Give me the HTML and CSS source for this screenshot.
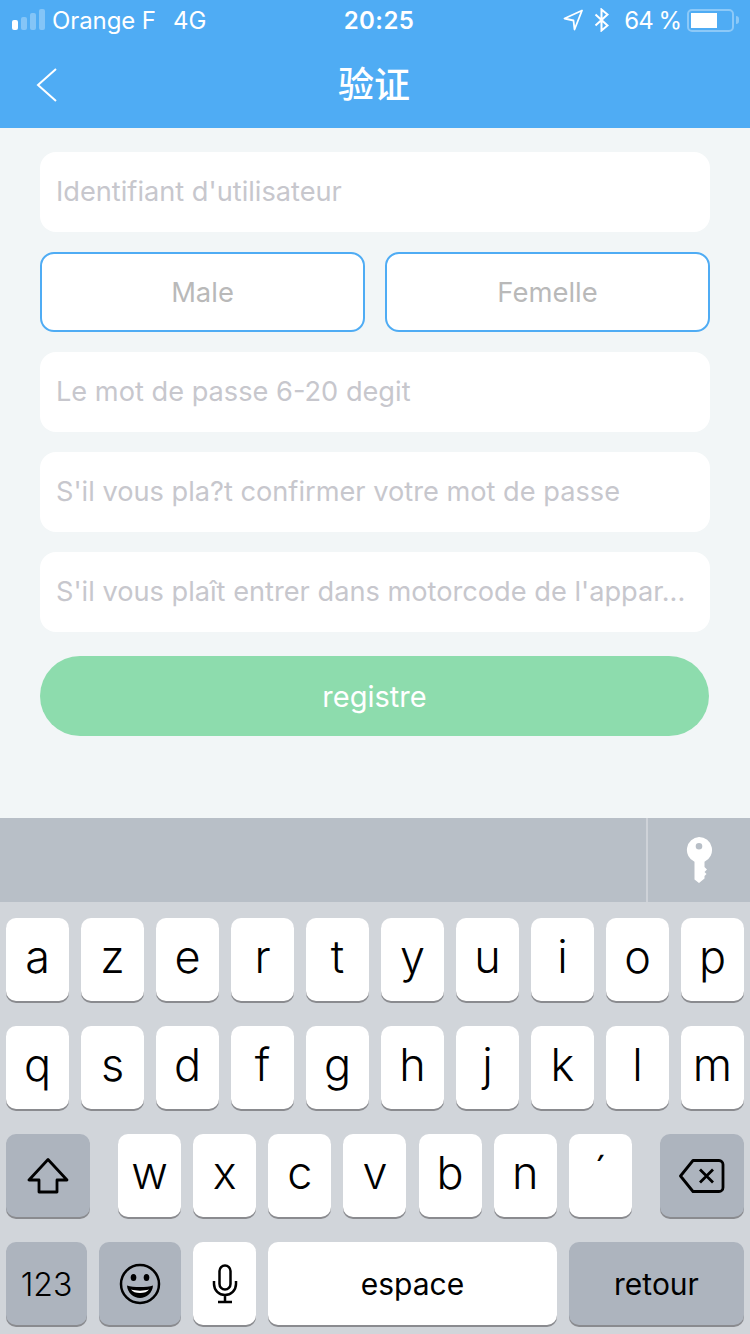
FILE: index.html
```html
<!DOCTYPE html>
<html lang="fr">
<head>
  <meta charset="UTF-8">
  <title>验证</title>
  <meta name="viewport" content="width=device-width, initial-scale=1">
  <link rel="stylesheet" href="styles.css">
</head>
<body>
  <div class="screen">
    <header class="header">
      <div class="status-bar">
        <div class="status-left">
          <svg class="signal" width="34" height="22" viewBox="0 0 34 22">
            <rect x="0" y="11" width="6" height="10" rx="2" fill="#fff"/>
            <rect x="9" y="8" width="6" height="13" rx="2" fill="#fff" opacity=".3"/>
            <rect x="18" y="4" width="6" height="17" rx="2" fill="#fff" opacity=".3"/>
            <rect x="27" y="0" width="6" height="21" rx="2" fill="#fff" opacity=".3"/>
          </svg>
          <span class="carrier">Orange F</span>
          <span class="network">4G</span>
        </div>
        <div class="clock">20:25</div>
        <div class="status-right">
          <svg class="locate" width="20" height="22" viewBox="0 0 20 22">
            <path d="M19 1.500 1.500 9.500 10.500 11.500 11.500 20.500Z" fill="none" stroke="#fff" stroke-width="1.800" stroke-linejoin="round"/>
          </svg>
          <svg class="bluetooth" width="16" height="24" viewBox="0 0 16 24">
            <path d="M1.500 6.500 13.500 17.500 7.500 22.500V1.500L13.500 6.500 1.500 17.500" fill="none" stroke="#fff" stroke-width="2"/>
          </svg>
          <span class="battery-pct">64 %</span>
          <div class="battery"><div class="battery-level"></div></div>
          <div class="battery-tip"></div>
        </div>
      </div>
      <div class="nav-bar">
        <svg class="back" width="22" height="34" viewBox="0 0 22 34">
          <path d="M20 1 2 17 20 33" fill="none" stroke="#fff" stroke-width="2"/>
        </svg>
        <h1 class="title">验证</h1>
      </div>
    </header>

    <main class="form">
      <div class="field">Identifiant d'utilisateur</div>
      <div class="gender-row">
        <div class="gender">Male</div>
        <div class="gender">Femelle</div>
      </div>
      <div class="field">Le mot de passe 6-20 degit</div>
      <div class="field">S'il vous pla?t confirmer votre mot de passe</div>
      <div class="field">S'il vous plaît entrer dans motorcode de l'appar...</div>
      <div class="submit">registre</div>
    </main>

    <section class="keyboard">
      <div class="toolbar">
        <div class="toolbar-key">
          <svg width="28" height="46" viewBox="0 0 28 46">
            <path fill-rule="evenodd" fill="#fff" d="M14 0a13 13 0 0 1 5.500 24.800V30l2.500 2.500-2.500 2.500 2 2-2 2v2.500L14 46l-4.500-3.500V24.800A13 13 0 0 1 14 0Zm0 6a3.300 3.300 0 1 0 0 6.600 3.300 3.300 0 0 0 0-6.600Z"/>
          </svg>
        </div>
      </div>
      <div class="keys">
        <div class="key-row">
          <div class="key">a</div><div class="key">z</div><div class="key">e</div><div class="key">r</div><div class="key">t</div>
          <div class="key">y</div><div class="key">u</div><div class="key">i</div><div class="key">o</div><div class="key">p</div>
        </div>
        <div class="key-row">
          <div class="key">q</div><div class="key">s</div><div class="key">d</div><div class="key">f</div><div class="key">g</div>
          <div class="key">h</div><div class="key">j</div><div class="key">k</div><div class="key">l</div><div class="key">m</div>
        </div>
        <div class="key-row key-row-split">
          <div class="key key-dark key-side key-plain">
            <svg width="42" height="36" viewBox="0 0 42 36">
              <path d="M21 1.500 2 22H12V34H30V22H40Z" fill="none" stroke="#000" stroke-width="2.800" stroke-linejoin="round"/>
            </svg>
          </div>
          <div class="key-group">
            <div class="key">w</div><div class="key">x</div><div class="key">c</div><div class="key">v</div>
            <div class="key">b</div><div class="key">n</div><div class="key">´</div>
          </div>
          <div class="key key-dark key-side key-plain">
            <svg width="46" height="34" viewBox="0 0 46 34">
              <path d="M14 1.500H40a4 4 0 0 1 4 4V28.500a4 4 0 0 1-4 4H14L1.500 17Z" fill="none" stroke="#000" stroke-width="2.800" stroke-linejoin="round"/>
              <path d="M21 10.500 34 23.500M34 10.500 21 23.500" fill="none" stroke="#000" stroke-width="2.800"/>
            </svg>
          </div>
        </div>
        <div class="key-row">
          <div class="key key-dark key-num">123</div>
          <div class="key key-dark key-emoji key-plain">
            <svg width="42" height="42" viewBox="0 0 42 42">
              <circle cx="21" cy="21" r="19" fill="none" stroke="#000" stroke-width="2.500"/>
              <ellipse cx="14.500" cy="14.500" rx="2.800" ry="3.500"/>
              <ellipse cx="27.500" cy="14.500" rx="2.800" ry="3.500"/>
              <path d="M8 22.500C14 24.500 28 24.500 34 22.500 33.500 30 27.500 35 21 35S8.500 30 8 22.500Z"/>
              <path d="M12 26.500C17 28 25 28 30 26.500 28.500 29 25 30 21 30S13.500 29 12 26.500Z" fill="#fff"/>
            </svg>
          </div>
          <div class="key key-plain">
            <svg width="26" height="40" viewBox="0 0 26 40">
              <rect x="7.500" y="1.500" width="11" height="24" rx="5.500" fill="none" stroke="#000" stroke-width="2.500"/>
              <path d="M2 17V20a11 11 0 0 0 22 0V17M13 31V37M6 38H20" fill="none" stroke="#000" stroke-width="2.500"/>
            </svg>
          </div>
          <div class="key key-plain key-space">espace</div>
          <div class="key key-dark key-plain key-return">retour</div>
        </div>
      </div>
    </section>
  </div>
</body>
</html>
```

FILE: styles.css
```css
:root {
  --blue: #4facf4;
  --page-bg: #f2f6f7;
  --hint: #c7c7cd;
  --kb-bg: #d1d5da;
  --key-dark: #adb4be;
  --font: 'Inter', 'Liberation Sans', 'Noto Sans CJK SC', sans-serif;
}
* {
  box-sizing: border-box;
}
body {
  margin: 0;
  font-family: var(--font);
  background: var(--page-bg);
}
.screen {
  width: 750px;
  height: 1334px;
  display: flex;
  flex-direction: column;
  overflow: hidden;
}

/* header */
.header {
  height: 128px;
  background: var(--blue);
  color: #fff;
  flex: none;
}
.status-bar {
  height: 40px;
  padding: 0 12px;
  display: flex;
  align-items: center;
  justify-content: space-between;
  position: relative;
  font-size: 24px;
}
.status-left, .status-right {
  display: flex;
  align-items: center;
}
.signal {
  margin-right: 6px;
}
.carrier {
  letter-spacing: -0.1px;
}
.network {
  margin-left: 17px;
}
.clock {
  position: absolute;
  left: 0;
  right: 0;
  text-align: center;
  font-weight: 600;
  letter-spacing: 0.4px;
  padding-left: 8px;
}
.status-right {
  margin-right: -1px;
}
.bluetooth {
  margin-left: 11px;
}
.battery-pct {
  margin-left: 14px;
  margin-right: 6px;
  letter-spacing: -1px;
}
.battery {
  width: 47px;
  height: 23px;
  border: 2px solid rgba(255,255,255,0.35);
  border-radius: 5px;
  padding: 2px;
}
.battery-level {
  width: 26px;
  height: 15px;
  background: #fff;
}
.battery-tip {
  width: 3px;
  height: 8px;
  margin-left: 2px;
  background: rgba(255,255,255,0.35);
  border-radius: 0 3px 3px 0;
}
.nav-bar {
  height: 88px;
  display: flex;
  align-items: center;
  justify-content: center;
  padding-right: 2px;
  position: relative;
}
.back {
  position: absolute;
  left: 36px;
  top: 28px;
}
.title {
  margin: 0;
  font-size: 36px;
  font-weight: 500;
  font-family: 'Noto Sans CJK SC', sans-serif;
  line-height: 1;
  position: relative;
  top: -2px;
}

/* form */
.form {
  flex: 1;
  padding: 24px 40px 0 40px;
  display: flex;
  flex-direction: column;
  gap: 20px;
}
.field {
  height: 80px;
  padding: 0 17px 2px 16px;
  display: flex;
  align-items: center;
  background: #fff;
  border-radius: 16px;
  color: var(--hint);
  font-size: 27.2px;
  white-space: nowrap;
}
.gender-row {
  display: flex;
  gap: 20px;
}
.gender {
  flex: 1;
  height: 80px;
  display: flex;
  align-items: center;
  justify-content: center;
  background: #fff;
  border: 2px solid var(--blue);
  border-radius: 14px;
  color: #b9b9b9;
  font-size: 27.4px;
}
.submit {
  width: 669px;
  height: 80px;
  margin-top: 4px;
  display: flex;
  align-items: center;
  justify-content: center;
  background: #8ddcad;
  border-radius: 40px;
  color: #fff;
  font-size: 29px;
}

/* keyboard */
.keyboard {
  height: 516px;
  flex: none;
  background: var(--kb-bg);
}
.toolbar {
  height: 84px;
  display: flex;
  justify-content: flex-end;
  background: #b8bfc7;
}
.toolbar-key {
  width: 104px;
  display: flex;
  align-items: center;
  justify-content: center;
  border-left: 2px solid #ced2d8;
}
.keys {
  padding: 16px 6px 0 6px;
  display: flex;
  flex-direction: column;
  gap: 25px;
}
.key-row {
  display: flex;
  gap: 12px;
}
.key-row-split {
  gap: 28px;
}
.key-group {
  display: flex;
  gap: 12.17px;
}
.key {
  width: 63px;
  height: 83px;
  flex: none;
  display: flex;
  align-items: center;
  justify-content: center;
  padding-bottom: 7px;
  background: #fff;
  border-radius: 10px;
  box-shadow: 0 2px 0 #8a8b8f;
  color: #000;
  font-size: 45px;
  font-weight: 300;
}
.key-plain {
  padding-bottom: 0;
}
.key-dark {
  background: var(--key-dark);
}
.key-side {
  width: 84px;
}
.key-num {
  width: 81px;
  padding: 1px 0 0 0;
  font-size: 32px;
}
.key-emoji {
  width: 82px;
}
.key-space {
  width: 289px;
  font-size: 30px;
  font-weight: 400;
}
.key-return {
  width: 175px;
  font-size: 30px;
  font-weight: 400;
}
```
